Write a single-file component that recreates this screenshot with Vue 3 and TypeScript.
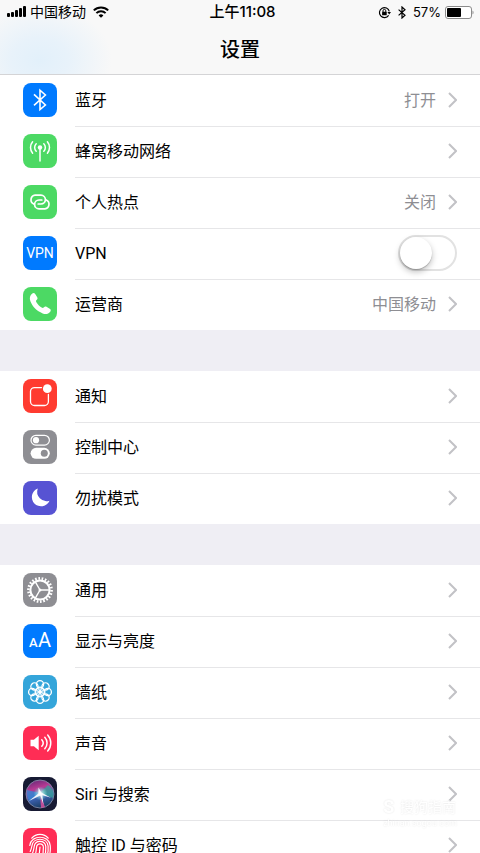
<script setup lang="ts">
import { ref } from 'vue'

interface Row {
  id: string
  label: string
  color: string
  value?: string
  toggle?: boolean
}

const vpnOn = ref(false)

const groups: Row[][] = [
  [
    { id: 'bluetooth', label: '蓝牙', color: 'blue', value: '打开' },
    { id: 'cellular', label: '蜂窝移动网络', color: 'green' },
    { id: 'hotspot', label: '个人热点', color: 'green', value: '关闭' },
    { id: 'vpn', label: 'VPN', color: 'blue', toggle: true },
    { id: 'carrier', label: '运营商', color: 'green', value: '中国移动' },
  ],
  [
    { id: 'notifications', label: '通知', color: 'red' },
    { id: 'control', label: '控制中心', color: 'gray' },
    { id: 'dnd', label: '勿扰模式', color: 'purple' },
  ],
  [
    { id: 'general', label: '通用', color: 'gray' },
    { id: 'display', label: '显示与亮度', color: 'blue' },
    { id: 'wallpaper', label: '墙纸', color: 'sky' },
    { id: 'sound', label: '声音', color: 'pink' },
    { id: 'siri', label: 'Siri 与搜索', color: 'navy' },
    { id: 'touchid', label: '触控 ID 与密码', color: 'pink' },
  ],
]

const petals = [0, 45, 90, 135, 180, 225, 270, 315]
</script>

<template>
  <div class="screen">
    <header class="top">
      <div class="status">
        <div class="side">
          <svg class="signal" width="19" height="12" viewBox="0 0 19 12" aria-hidden="true">
            <rect x="0" y="7" width="3" height="4" rx="1" />
            <rect x="4" y="6" width="3" height="5" rx="1" />
            <rect x="8" y="4" width="3" height="7" rx="1" />
            <rect x="12" y="2" width="3" height="9" rx="1" />
            <rect x="16" y="0" width="3" height="11" rx="1" />
          </svg>
          <span class="carrier">中国移动</span>
          <svg class="wifi" width="16" height="12" viewBox="0 0 16 12" fill="none" stroke="#000" stroke-width="2" aria-hidden="true">
            <path d="M0.8 4.4a10.2 10.2 0 0 1 14.4 0" />
            <path d="M3.4 7.1a6.5 6.5 0 0 1 9.2 0" />
            <path d="M8 11.8 5.6 9.4a3.4 3.4 0 0 1 4.8 0z" fill="#000" stroke="none" />
          </svg>
        </div>
        <time class="clock">上午11:08</time>
        <div class="side end">
          <svg width="13" height="13" viewBox="0 0 13 13" fill="none" stroke="#000" stroke-width="1.2" aria-hidden="true">
            <path d="M10.6 9.4A5 5 0 1 1 11.3 5.4" />
            <path d="M9.4 6h3.6l-1.8 2.6z" fill="#000" stroke="none" />
            <rect x="4.1" y="5.8" width="4.6" height="3.5" rx=".4" fill="#000" stroke="none" />
            <path d="M5 6V4.8a1.4 1.4 0 0 1 2.8 0V6" stroke-width="1" />
          </svg>
          <svg class="bt" width="8" height="13" viewBox="0 0 8 13" fill="none" stroke="#000" stroke-width="1.2" aria-hidden="true">
            <path d="M.6 3.6 7 9.2 4 12V1l3 2.8L.6 9.4" />
          </svg>
          <span class="percent">57%</span>
          <svg width="29" height="13" viewBox="0 0 29 13" aria-hidden="true">
            <rect x=".5" y=".5" width="26" height="12" rx="2.5" fill="#fff" stroke="#8b8b8b" />
            <rect x="2" y="2" width="14" height="9" rx="1" />
            <path d="M27.5 4.5c1.4.6 1.4 3.4 0 4z" fill="#8b8b8b" />
          </svg>
        </div>
      </div>
      <h1 class="title">设置</h1>
    </header>

    <main class="list">
      <section v-for="(group, g) in groups" :key="g" class="group">
        <component
          :is="row.toggle ? 'label' : 'a'"
          v-for="row in group"
          :key="row.id"
          class="row"
          :href="row.toggle ? undefined : '#' + row.id"
        >
          <span class="icon" :class="row.color">
            <svg v-if="row.id === 'bluetooth'" viewBox="0 0 34 34" fill="none" stroke="#fff" stroke-width="1.6">
              <path d="M11 11.4 22.4 22 17 26.6V7.2L22.4 12 11 22.4" />
            </svg>
            <svg v-else-if="row.id === 'cellular'" viewBox="0 0 34 34" fill="none" stroke="#fff" stroke-width="1.5" stroke-linecap="round">
              <path d="M17 14v13" />
              <circle cx="17" cy="13.5" r="2.2" fill="#fff" stroke="none" />
              <path d="M13.2 9.8a5.2 5.2 0 0 0 0 7.4M20.8 9.8a5.2 5.2 0 0 1 0 7.4M9.6 7.8a8.8 8.8 0 0 0 0 11.4M24.4 7.8a8.8 8.8 0 0 1 0 11.4" />
            </svg>
            <svg v-else-if="row.id === 'hotspot'" viewBox="0 0 34 34" fill="none" stroke="#fff" stroke-width="1.7" stroke-linecap="round">
              <path d="M10.8 19A4.6 4.6 0 0 1 12.100 10.200h5.900a4.400 4.400 0 0 1 0 8.800h-2.800" />
              <path d="M23.200 15a4.600 4.600 0 0 1-1.300 8.800h-5.900a4.400 4.400 0 0 1 0-8.800h2.800" />
            </svg>
            <svg v-else-if="row.id === 'vpn'" viewBox="0 0 34 34">
              <text class="vpn-text" x="17" y="22" text-anchor="middle">VPN</text>
            </svg>
            <svg v-else-if="row.id === 'carrier'" viewBox="0 0 34 34" fill="#fff">
              <path d="M9.300 6.600c1-.9 2.200-.6 2.900.5l2 3.200c.6 1 .4 1.800-.4 2.500-.9.8-1 1.400-.4 2.400 1.300 2.200 3 4 5.200 5.400 1 .6 1.600.5 2.400-.4.700-.8 1.500-1 2.500-.4l3.200 2c1.200.7 1.400 1.900.5 2.900-1.800 2.200-4.400 3.100-7.500 1.700C13.600 23.900 9.700 20 7.400 14.300c-1.200-3-.5-5.700 1.900-7.700z" />
            </svg>
            <svg v-else-if="row.id === 'notifications'" viewBox="0 0 34 34" fill="none" stroke="#fff" stroke-width="1.300" stroke-linecap="round">
              <path d="M18.500 8.600h-7a4 4 0 0 0-4 4v9.900a4 4 0 0 0 4 4h9.900a4 4 0 0 0 4-4v-7" />
              <circle cx="24.300" cy="9.700" r="4.400" fill="#fff" stroke="none" />
            </svg>
            <svg v-else-if="row.id === 'control'" viewBox="0 0 34 34" fill="none" stroke="#fff" stroke-width="1.200">
              <rect x="8" y="5.300" width="18.400" height="9.800" rx="4.900" />
              <circle cx="13" cy="10.200" r="3.100" fill="#fff" stroke="none" />
              <rect x="7.600" y="17.800" width="19.200" height="11" rx="5.500" fill="#fff" stroke="none" />
              <circle cx="21.300" cy="23.300" r="3.500" fill="#8e8e93" stroke="none" />
            </svg>
            <svg v-else-if="row.id === 'dnd'" viewBox="0 0 34 34" fill="#fff">
              <path d="M14.800 7.500a9.200 9.200 0 1 0 11.700 12.200A9.400 9.400 0 0 1 14.800 7.500z" />
            </svg>
            <svg v-else-if="row.id === 'general'" viewBox="0 0 34 34" fill="none" stroke="#fff">
              <circle cx="17" cy="17" r="11.600" stroke-width="2.600" pathLength="44" stroke-dasharray="1 1" />
              <circle cx="17" cy="17" r="9.600" stroke-width="2" />
              <circle cx="17" cy="17" r="1.500" fill="#fff" stroke="none" />
              <path d="M17 17h9.500M17 17l-4.800-8.300M17 17l-4.800 8.300" stroke-width="1.400" />
            </svg>
            <svg v-else-if="row.id === 'display'" viewBox="0 0 34 34">
              <text class="small-a" x="6" y="23">A</text>
              <text class="large-a" x="15" y="23">A</text>
            </svg>
            <svg v-else-if="row.id === 'wallpaper'" viewBox="0 0 34 34" fill="none" stroke="#fff" stroke-width="1.300">
              <g v-for="angle in petals" :key="angle" :transform="`rotate(${angle} 17 17)`">
                <circle cx="17" cy="9.200" r="3.600" />
                <ellipse cx="17" cy="13.700" rx="1.300" ry="2" stroke-width=".800" />
              </g>
              <circle cx="17" cy="17" r="1.400" fill="#fff" stroke="none" />
            </svg>
            <svg v-else-if="row.id === 'sound'" viewBox="0 0 34 34" fill="none" stroke="#fff" stroke-width="1.500" stroke-linecap="round">
              <path d="M7.500 13.700h3.400l4.800-3.900v14.400l-4.800-3.900H7.500z" fill="#fff" stroke="none" />
              <path d="M18.800 13.700a5 5 0 0 1 0 6.600M21.800 11.200a8.600 8.600 0 0 1 0 11.600M24.700 9a12 12 0 0 1 0 16" />
            </svg>
            <svg v-else-if="row.id === 'siri'" viewBox="0 0 34 34">
              <defs>
                <radialGradient id="siri-core">
                  <stop offset="0" stop-color="#fff" />
                  <stop offset=".4" stop-color="#c4f2f4" stop-opacity=".6" />
                  <stop offset="1" stop-color="#6fd" stop-opacity="0" />
                </radialGradient>
                <linearGradient id="siri-orb" x1=".3" y1="0" x2=".6" y2="1">
                  <stop offset="0" stop-color="#6b2a78" />
                  <stop offset=".3" stop-color="#b83a94" />
                  <stop offset=".6" stop-color="#3f62b4" />
                  <stop offset="1" stop-color="#153a5c" />
                </linearGradient>
              </defs>
              <circle cx="17" cy="17" r="14" fill="url(#siri-orb)" stroke="#8a92b0" stroke-width=".800" />
              <path d="M17 16 25 8a11 11 0 0 1 5 13z" fill="#3aa39a" opacity=".75" />
              <path d="M17 16 4 13a13 13 0 0 0 3 11z" fill="#3189d8" opacity=".75" />
              <path d="M17 17 18 31l4-1z" fill="#e250a0" opacity=".8" />
              <circle cx="17.500" cy="16.500" r="7" fill="url(#siri-core)" />
              <path d="M15.500 10.500l2.800 4.900 9.700 5.400-8.600-2.600 1 9.300-3.100-8.900L5.800 24l9.600-7.600z" fill="#fff" opacity=".9" />
            </svg>
            <svg v-else viewBox="0 0 34 34" fill="none" stroke="#fff" stroke-width="1.200" stroke-linecap="round">
              <path d="M8.800 10.200C13 5 21 5 25.200 10.200" />
              <path d="M6.800 17.500c1.200-11 19.200-11 20.400 0 .3 3 .2 5-.2 7.500" />
              <path d="M7.200 23.500c.7-1.600 1.300-3.400 1.700-5.500 1-9 15.200-9 16.200 0 .3 3.600 0 6.500-.8 9.500" />
              <path d="M8.800 27c1.200-2.600 2-5.400 2.400-8.500.8-6.800 10.800-6.800 11.600 0 .2 4.200-.2 7.700-1.400 11" />
              <path d="M11.500 29c1.300-3.200 1.900-6.500 2.100-10 .4-4.200 6.400-4.200 6.800 0 .2 4.500-.5 8.500-2 12" />
              <path d="M14.600 30.500c1.600-3.700 2.400-7.500 2.400-11.500" />
            </svg>
          </span>
          <span class="body">
            <span class="label">{{ row.label }}</span>
            <span v-if="row.value" class="value">{{ row.value }}</span>
            <input v-if="row.toggle" v-model="vpnOn" class="switch" type="checkbox" role="switch" />
            <svg v-else class="chevron" width="9" height="16" viewBox="0 0 9 16" fill="none" stroke="#c2c2c6" stroke-width="2" aria-hidden="true">
              <path d="M1 1l7 7-7 7" />
            </svg>
          </span>
        </component>
      </section>
    </main>

    <div class="watermark">
      <span class="mark">S</span>
      <span class="name">搜狗指南</span>
      <span class="site">zhinan.sogou.com</span>
    </div>
  </div>
</template>

<style>
body {
  background: #fff;
}
</style>

<style scoped>
.screen {
  position: relative;
  display: flex;
  flex-direction: column;
  height: 100vh;
  overflow: hidden;
  color: #000;
  font-family: Roboto, 'Noto Sans CJK SC', sans-serif;
}

.top {
  flex: none;
  border-bottom: 1px solid #d4d4d6;
  background: radial-gradient(ellipse 72px 56px at 40px 60px, #e2f0fa, #e8f2fa 40%, #f8f8f8), #f8f8f8;
}

.status {
  display: grid;
  grid-template-columns: 1fr auto 1fr;
  align-items: center;
  height: 24px;
  padding: 0 6px 0 7px;
  font-family: Inter, 'Noto Sans CJK SC', sans-serif;
  font-size: 14px;
  line-height: 20px;
}

.side {
  display: flex;
  align-items: center;
  gap: 4px;
}

.end {
  justify-content: flex-end;
}

.wifi {
  margin-left: 3px;
}

.bt {
  margin: 0 3px;
}

.clock {
  padding-left: 4px;
  font-size: 15px;
  font-weight: 500;
}

.percent {
  font-size: 13px;
}

.title {
  margin: 0;
  padding: 11px 0 9px;
  font-size: 20px;
  font-weight: 500;
  line-height: 30px;
  text-align: center;
}

.list {
  flex: 1;
  min-height: 0;
  overflow-y: auto;
  scrollbar-width: none;
  background: #efeef4;
}

.group {
  background: #fff;
}

.group + .group {
  margin-top: 41px;
}

.row {
  display: flex;
  align-items: stretch;
  height: 51px;
  padding-left: 23px;
  color: inherit;
  text-decoration: none;
}

.icon {
  flex: none;
  width: 34px;
  height: 34px;
  margin: 8px 18px 0 0;
  border-radius: 8px;
  overflow: hidden;
}

.icon svg {
  display: block;
  width: 100%;
  height: 100%;
}

.blue { background: #007aff; }
.green { background: #4cd964; }
.red { background: #ff3b30; }
.gray { background: #8e8e93; }
.purple { background: #5753d3; }
.sky { background: #34a5da; }
.pink { background: #ff2d55; }
.navy { background: #171a33; }

.body {
  display: flex;
  flex: 1;
  align-items: center;
  padding: 0 23px 2px 0;
  border-top: 1px solid #e6e6e8;
}

.row:first-child .body {
  border-top-color: transparent;
}

.label {
  flex: 1;
  padding-top: 2px;
  font-size: 16px;
  line-height: 24px;
}

.value {
  padding-top: 2px;
  color: #8e8e93;
  font-size: 16px;
  line-height: 24px;
}

.chevron {
  margin-left: 12px;
}

.switch {
  appearance: none;
  display: flex;
  width: 59px;
  height: 36px;
  margin: 0;
  border: 2px solid #e2e2e2;
  border-radius: 18px;
  background: #fff;
}

.switch::before {
  content: '';
  width: 32px;
  height: 32px;
  border-radius: 50%;
  background: #fff;
  box-shadow: 0 3px 6px rgba(0, 0, 0, 0.25), 0 1px 1px rgba(0, 0, 0, 0.2);
}

.switch:checked {
  justify-content: flex-end;
  border-color: #4cd964;
  background: #4cd964;
}

.vpn-text {
  fill: #fff;
  font-size: 14px;
}

.small-a,
.large-a {
  fill: #fff;
  font-size: 13px;
  font-weight: 500;
}

.large-a {
  font-size: 20px;
  font-weight: 400;
}

.watermark {
  position: absolute;
  right: 23px;
  bottom: 24px;
  display: grid;
  grid-template-columns: auto auto;
  align-items: center;
  column-gap: 5px;
  color: #fff;
  text-shadow: 0 0 2px rgba(0, 0, 0, 0.12);
  pointer-events: none;
}

.mark {
  font-size: 18px;
  font-weight: 700;
  line-height: 20px;
}

.name {
  font-size: 14px;
  line-height: 20px;
}

.site {
  grid-column: 1 / 3;
  font-size: 9px;
  line-height: 12px;
}
</style>
